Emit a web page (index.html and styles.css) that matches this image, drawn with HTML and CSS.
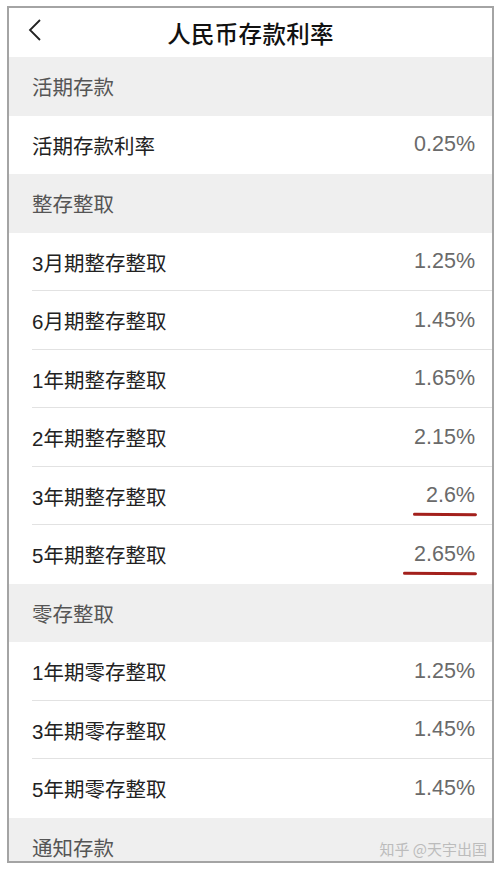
FILE: index.html
```html
<!DOCTYPE html>
<html lang="zh-CN">
<head>
<meta charset="utf-8">
<title>人民币存款利率</title>
<link rel="stylesheet" href="styles.css">
</head>
<body>
<div class="frame">
  <header class="topbar">
    <svg class="back" width="14" height="22" viewBox="0 0 14 22"><polyline points="12,1 2,11 12,21" fill="none" stroke="#222" stroke-width="1.8"/></svg>
    <h1 class="title">人民币存款利率</h1>
  </header>
  <div class="section">活期存款</div>
  <div class="row"><span class="label">活期存款利率</span><span class="value">0.25%</span></div>
  <div class="section">整存整取</div>
  <div class="row line"><span class="label">3月期整存整取</span><span class="value">1.25%</span></div>
  <div class="row line"><span class="label">6月期整存整取</span><span class="value">1.45%</span></div>
  <div class="row line"><span class="label">1年期整存整取</span><span class="value">1.65%</span></div>
  <div class="row line"><span class="label">2年期整存整取</span><span class="value">2.15%</span></div>
  <div class="row line"><span class="label">3年期整存整取</span><span class="value marked mark-a">2.6%</span></div>
  <div class="row"><span class="label">5年期整存整取</span><span class="value marked mark-b">2.65%</span></div>
  <div class="section">零存整取</div>
  <div class="row line"><span class="label">1年期零存整取</span><span class="value">1.25%</span></div>
  <div class="row line"><span class="label">3年期零存整取</span><span class="value">1.45%</span></div>
  <div class="row"><span class="label">5年期零存整取</span><span class="value">1.45%</span></div>
  <div class="section">通知存款</div>
  <div class="watermark">知乎 @天宇出国</div>
</div>
</body>
</html>
```
FILE: styles.css
```css
* { box-sizing: border-box; }
html, body { margin: 0; padding: 0; background: #fff; }
body {
  font-family: "Liberation Sans", "Noto Sans CJK SC", sans-serif;
  width: 500px;
  height: 869px;
  overflow: hidden;
}
.frame {
  position: relative;
  margin: 6px 0 0 7px;
  width: 487px;
  height: 857px;
  border: 2px solid #a4a4a4;
  overflow: hidden;
  background: #fff;
}
.topbar {
  height: 49px;
  display: flex;
  align-items: center;
  justify-content: center;
  position: relative;
}
.back {
  position: absolute;
  left: 19px;
  top: 11px;
}
.title {
  margin: 0;
  font-size: 23.5px;
  font-weight: 500;
  color: #111;
  letter-spacing: 0.3px;
  font-family: "Noto Sans CJK SC", sans-serif;
}
.section {
  height: 58.5px;
  background: #efefef;
  display: flex;
  align-items: center;
  padding-left: 23px;
  font-size: 20.5px;
  color: #555;
  font-family: "Noto Sans CJK SC", sans-serif;
}
.row {
  height: 58.5px;
  display: flex;
  align-items: center;
  justify-content: space-between;
  padding: 0 17px 0 23px;
  position: relative;
}
.row.line::after {
  content: "";
  position: absolute;
  left: 23px;
  right: 0;
  bottom: 0;
  height: 1px;
  background: #e2e2e2;
}
.label {
  font-size: 20.5px;
  color: #222;
  font-family: "Liberation Sans", "Noto Sans CJK SC", sans-serif;
}
.value {
  font-size: 21.5px;
  color: #6a6a6a;
  position: relative;
}
.marked::after {
  content: "";
  position: absolute;
  height: 3px;
  border-radius: 2px;
  background: #a3201c;
}
.mark-a::after {
  left: -13px;
  right: -2px;
  bottom: -8px;
  transform: rotate(0.6deg);
}
.mark-b::after {
  left: -11px;
  right: -2px;
  bottom: -8px;
  transform: rotate(0.3deg);
}
.watermark {
  position: absolute;
  right: 5px;
  bottom: 2px;
  font-size: 15px;
  color: #bcbcbc;
  font-family: "Noto Sans CJK SC", sans-serif;
}
```
